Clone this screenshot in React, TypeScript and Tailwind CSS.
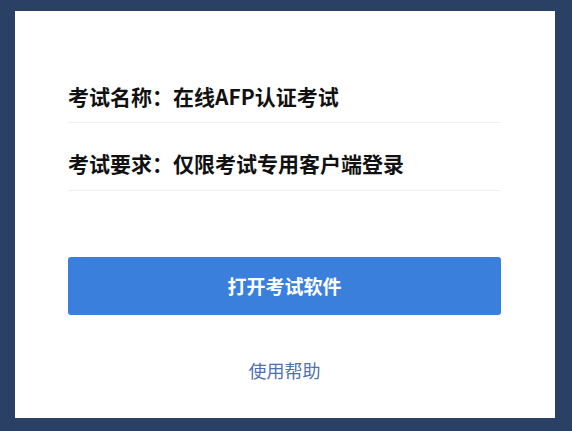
import React from "react";

export default function App() {
  const font = { fontFamily: '"Noto Sans CJK SC", "Noto Sans", sans-serif' };
  return (
    <div className="w-[572px] h-[431px] bg-[#2b4065] pt-[11px] pl-[15px] overflow-hidden" style={font}>
      <div className="w-[540px] h-[407px] bg-white pl-[53px] pr-[54px] pt-[44px] flex flex-col">
        <div className="pt-[27px] pb-[12px] border-b border-[#f1f1f1] text-[21px] leading-[28px] font-bold text-[#111]">
          考试名称：在线AFP认证考试
        </div>
        <div className="pt-[26px] pb-[13px] border-b border-[#f1f1f1] text-[21px] leading-[28px] font-bold text-[#111]">
          考试要求：仅限考试专用客户端登录
        </div>
        <button className="mt-[66px] h-[58px] w-full rounded-[3px] bg-[#3b7fdd] text-white text-[19px] font-bold flex items-center justify-center">
          打开考试软件
        </button>
        <div className="mt-[43px] text-center text-[18px] leading-[24px] text-[#4d72ae]">
          使用帮助
        </div>
      </div>
    </div>
  );
}
